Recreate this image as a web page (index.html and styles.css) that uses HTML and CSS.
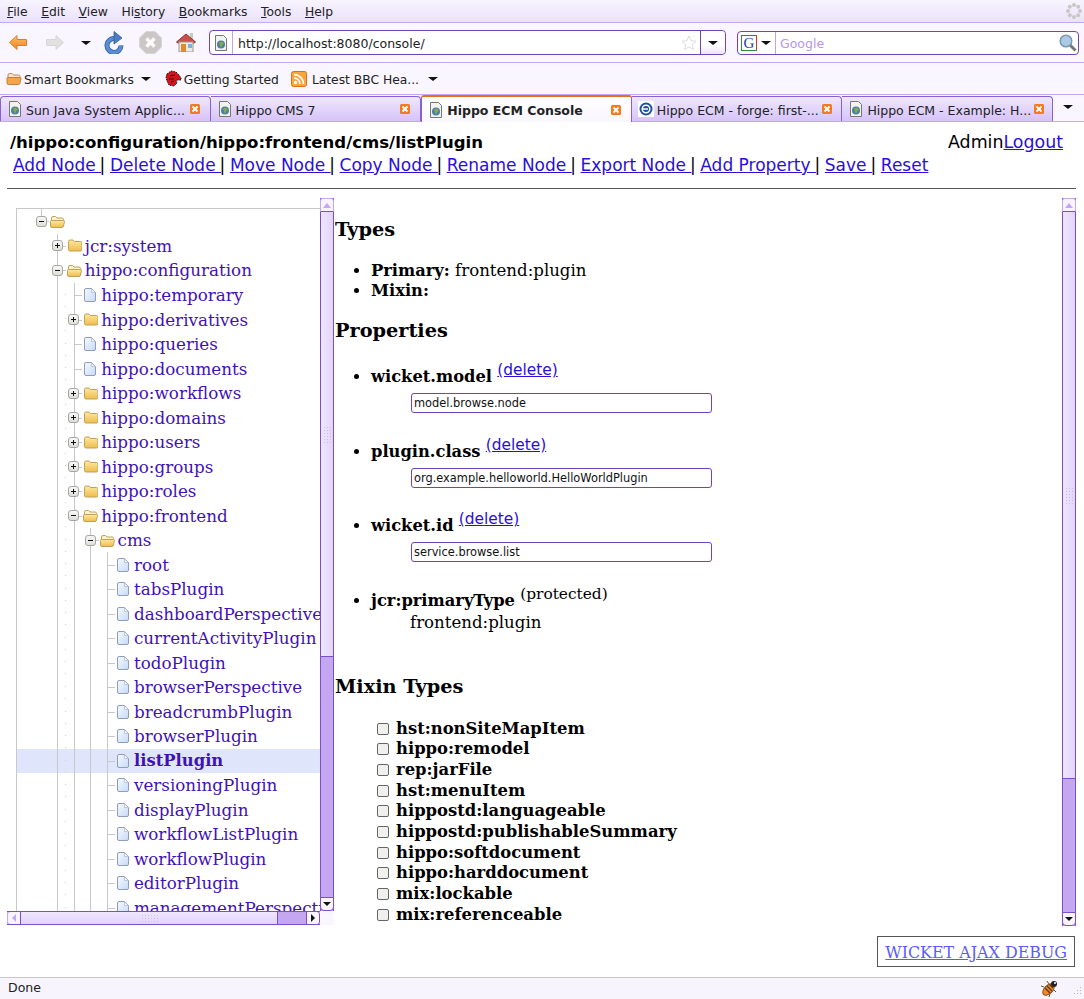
FILE: index.html
```html
<!DOCTYPE html>
<html lang="en">
<head>
    <meta charset="UTF-8">
    <title>Hippo ECM Console</title>
    <link rel="stylesheet" href="styles.css">
</head>
<body>
    <svg class="defs" width="0" height="0">
        <defs>
            <linearGradient id="gold" x1="0" y1="0" x2="0" y2="1"><stop offset="0" stop-color="#fde9a0"/><stop offset="1" stop-color="#eebc4c"/></linearGradient>
            <linearGradient id="paper" x1="0" y1="0" x2="1" y2="1"><stop offset="0" stop-color="#f6fafe"/><stop offset="1" stop-color="#c6daf6"/></linearGradient>
            <linearGradient id="btn" x1="0" y1="0" x2="0" y2="1"><stop offset="0" stop-color="#fafafa"/><stop offset="1" stop-color="#dcdcd8"/></linearGradient>
            <linearGradient id="back" x1="0" y1="0" x2="0" y2="1"><stop offset="0" stop-color="#fbc06a"/><stop offset="1" stop-color="#ee8418"/></linearGradient>
        </defs>
        <symbol id="page" viewBox="0 0 16 16">
            <path d="M2.5 .5h8l3 3v12h-11z" fill="#f2f2ee" stroke="#77776f"/>
            <circle cx="8" cy="9.5" r="4" fill="#4a7fa8"/>
            <path d="M6 7.5l3-1 2 2-2 2-1 2.5-1-2.5z" fill="#8aa84a"/>
        </symbol>
        <symbol id="folder" viewBox="0 0 14 13">
            <path d="M.5 2.5q0-1.500 1.500-1.500h3l1.500 1.500h6q1.500 0 1.500 1.500v6.500q0 1.500-1.500 1.500H2q-1.500 0-1.500-1.500z" fill="url(#gold)" stroke="#c2a05c"/>
        </symbol>
        <symbol id="folder-open" viewBox="0 0 15 13">
            <path d="M1.500 3q0-1.500 1.500-1.500h2.500l1.500 1.500h5q1.500 0 1.500 1.500V6h-12z" fill="#fdf4cc" stroke="#c2a05c"/>
            <path d="M.5 6.500q0-1 1-1h12q1.200 0 1 1l-1 4.500q-.3 1.500-1.500 1.500H2q-1.500 0-1.500-1.500z" fill="url(#gold)" stroke="#c2a05c"/>
        </symbol>
        <symbol id="doc" viewBox="0 0 12 14">
            <path d="M.5 2q0-1.500 1.500-1.500h5.500l4 4v7.500q0 1.500-1.500 1.500H2q-1.500 0-1.500-1.500z" fill="url(#paper)" stroke="#8f9cbd"/>
            <path d="M7.500 .8v3.700h3.700z" fill="#fff" stroke="#a9b5d0" stroke-width=".7"/>
        </symbol>
        <symbol id="plus" viewBox="0 0 11 11">
            <rect x=".5" y=".5" width="10" height="10" rx="2.500" fill="url(#btn)" stroke="#a6a6a2"/>
            <path d="M3 5.500h5M5.500 3v5" stroke="#111"/>
        </symbol>
        <symbol id="minus" viewBox="0 0 11 11">
            <rect x=".5" y=".5" width="10" height="10" rx="2.500" fill="url(#btn)" stroke="#a6a6a2"/>
            <path d="M3 5.500h5" stroke="#111"/>
        </symbol>
        <symbol id="close" viewBox="0 0 10 10">
            <rect width="10" height="10" rx="1.500" fill="#f37a1f"/>
            <path d="M2.500 2.500l5 5M7.500 2.500l-5 5" stroke="#fff" stroke-width="1.800"/>
        </symbol>
        <symbol id="grip" viewBox="0 0 17 9">
            <path d="M1 1h1v1H1zM4 1h1v1H4zM7 1h1v1H7zM10 1h1v1h-1zM13 1h1v1h-1zM16 1h1v1h-1zM1 4h1v1H1zM4 4h1v1H4zM7 4h1v1H7zM10 4h1v1h-1zM13 4h1v1h-1zM16 4h1v1h-1zM1 7h1v1H1zM4 7h1v1H4zM7 7h1v1H7zM10 7h1v1h-1zM13 7h1v1h-1zM16 7h1v1h-1z" fill="#c9c0dc"/>
        </symbol>
        <symbol id="vgrip" viewBox="0 0 9 17">
            <path d="M1 1h1v1H1zM1 4h1v1H1zM1 7h1v1H1zM1 10h1v1H1zM1 13h1v1H1zM1 16h1v1H1zM4 1h1v1H4zM4 4h1v1H4zM4 7h1v1H4zM4 10h1v1H4zM4 13h1v1H4zM4 16h1v1H4zM7 1h1v1H7zM7 4h1v1H7zM7 7h1v1H7zM7 10h1v1H7zM7 13h1v1H7zM7 16h1v1H7z" fill="#c9c0dc"/>
        </symbol>
    </svg>

    <div class="menubar">
        <span class="menu"><u>F</u>ile</span>
        <span class="menu"><u>E</u>dit</span>
        <span class="menu"><u>V</u>iew</span>
        <span class="menu">Hi<u>s</u>tory</span>
        <span class="menu"><u>B</u>ookmarks</span>
        <span class="menu"><u>T</u>ools</span>
        <span class="menu"><u>H</u>elp</span>
        <svg class="throbber" width="16" height="16" viewBox="0 0 16 16">
            <g fill="#c9c6c6">
                <circle cx="8" cy="2" r="2"/><circle cx="12.200" cy="3.800" r="2"/><circle cx="14" cy="8" r="2"/><circle cx="12.200" cy="12.200" r="2"/>
                <circle cx="8" cy="14" r="2"/><circle cx="3.800" cy="12.200" r="2"/><circle cx="2" cy="8" r="2"/><circle cx="3.800" cy="3.800" r="2"/>
            </g>
        </svg>
    </div>

    <div class="navbar">
        <svg class="t-back" width="18" height="15" viewBox="0 0 18 15"><path d="M.5 7.500L8 .5v4h9.500v6H8v4z" fill="url(#back)" stroke="#e07f1e"/></svg>
        <svg class="t-forward" width="18" height="15" viewBox="0 0 18 15"><path d="M17.500 7.500L10 .5v4H.5v6H10v4z" fill="#e2e0e0" stroke="#d8d6d6"/></svg>
        <span class="drop t-drop"></span>
        <svg class="t-reload" width="20" height="23" viewBox="0 0 20 23"><path d="M11 7.500A7 7 0 1 0 17 14.500" fill="none" stroke="#2f5c9f" stroke-width="5"/><path d="M11 7.500A7 7 0 1 0 17 14.500" fill="none" stroke="#5a8ed2" stroke-width="3.500"/><path d="M10 .5l8 6.500-8 6z" fill="#4c7fc4" stroke="#2f5c9f" stroke-width=".8"/></svg>
        <svg class="t-stop" width="23" height="23" viewBox="0 0 23 23"><path d="M7 .5h9L22.500 7v9L16 22.500H7L.5 16V7z" fill="#cbc7c7" stroke="#d8d5d5"/><path d="M7.500 7.500l8 8M15.500 7.500l-8 8" stroke="#fff" stroke-width="3.200"/></svg>
        <svg class="t-home" width="20" height="19" viewBox="0 0 20 19"><rect x="14" y="0" width="3" height="6" fill="#c9c6bc"/><path d="M.5 9L10 1l9.500 8-1.500 1H2z" fill="#c9504a" stroke="#8c332f"/><rect x="3" y="9" width="14" height="10" fill="#eeeae0" stroke="#9d9a90"/><rect x="5" y="11" width="5" height="8" fill="#e08a30"/><rect x="12" y="11" width="4" height="4" fill="#7fb0d8"/></svg>

        <div class="urlbar">
            <span class="site-box"><svg width="16" height="16"><use href="#page"/></svg></span>
            <span class="url-text">http://localhost:8080/console/</span>
            <svg class="star" width="16" height="16" viewBox="0 0 16 16"><path d="M8 1l2.100 4.700 5 .5-3.800 3.300 1.100 5L8 11.900l-4.400 2.600 1.100-5L.9 6.200l5-.5z" fill="#fff" stroke="#dcdcdc"/></svg>
            <span class="url-drop"><span class="drop"></span></span>
        </div>
        <div class="searchbar">
            <span class="engine">
                <span class="g-logo">G</span>
                <span class="drop"></span>
            </span>
            <span class="search-text">Google</span>
            <svg class="glass" width="18" height="18" viewBox="0 0 18 18"><path d="M11 11l5.500 5.500" stroke="#77776f" stroke-width="3"/><circle cx="7" cy="7" r="5.800" fill="#a9cbe8" stroke="#7d97ad" stroke-width="1.500"/></svg>
        </div>
    </div>

    <div class="bookmarks">
        <span class="bm">
            <svg width="16" height="13" viewBox="0 0 15 13"><path d="M1.500 3q0-1.500 1.500-1.500h2.500l1.500 1.500h5q1.500 0 1.500 1.500V6h-12z" fill="#f4e2cf" stroke="#b98a5c"/><path d="M.5 6.500q0-1 1-1h12q1.200 0 1 1l-1 4.500q-.3 1.500-1.500 1.500H2q-1.500 0-1.500-1.500z" fill="#f5a44e" stroke="#c87f35"/></svg>
            <span class="bm-text">Smart Bookmarks</span>
            <span class="drop bm-drop"></span>
        </span>
        <span class="bm">
            <svg width="17" height="17" viewBox="0 0 17 17"><path d="M2 4l4-3 5 1 3 3 2 3v2l-5 0 1 3-3 3-5-1-2-4-1-4z" fill="#d2141c" stroke="#1a1a1a" stroke-dasharray="1.500 1"/><path d="M5 6l5-1M4 9l5 0M6 12l3-1" stroke="#5a0508"/></svg>
            <span class="bm-text">Getting Started</span>
        </span>
        <span class="bm rss">
            <svg width="16" height="16" viewBox="0 0 16 16"><rect x=".5" y=".5" width="15" height="15" rx="2" fill="#f8a53a" stroke="#d9701a"/><circle cx="4.500" cy="11.500" r="1.700" fill="#fff"/><path d="M3 7a6 6 0 0 1 6 6M3 3.500a9.500 9.500 0 0 1 9.500 9.500" fill="none" stroke="#fff" stroke-width="1.700"/></svg>
            <span class="bm-text">Latest BBC Hea...</span>
            <span class="drop bm-drop-far"></span>
        </span>
    </div>

    <div class="tabstrip">
        <div class="tab"><svg width="16" height="16"><use href="#page"/></svg><span class="tab-title">Sun Java System Applic...</span><svg class="tab-close" width="10" height="10"><use href="#close"/></svg></div>
        <div class="tab"><svg width="16" height="16"><use href="#page"/></svg><span class="tab-title">Hippo CMS 7</span><svg class="tab-close" width="10" height="10"><use href="#close"/></svg></div>
        <div class="tab active"><svg width="16" height="16"><use href="#page"/></svg><span class="tab-title">Hippo ECM Console</span><svg class="tab-close" width="10" height="10"><use href="#close"/></svg></div>
        <div class="tab"><svg width="16" height="16" viewBox="0 0 16 16"><rect width="16" height="16" fill="#fff"/><circle cx="8" cy="8" r="6.500" fill="#1f4f9c"/><circle cx="8" cy="8" r="3.800" fill="none" stroke="#fff" stroke-width="1.500"/><path d="M5 8h5" stroke="#fff" stroke-width="1.500"/></svg><span class="tab-title">Hippo ECM - forge: first-...</span><svg class="tab-close" width="10" height="10"><use href="#close"/></svg></div>
        <div class="tab"><svg width="16" height="16"><use href="#page"/></svg><span class="tab-title">Hippo ECM - Example: H...</span><svg class="tab-close" width="10" height="10"><use href="#close"/></svg></div>
        <div class="tab-end"><span class="drop"></span></div>
    </div>

    <div class="page">
        <div class="head-row">
            <div class="crumb">/hippo:configuration/hippo:frontend/cms/listPlugin</div>
            <div class="user">Admin<a href="#">Logout</a></div>
        </div>
        <div class="actions">
            <a href="#">Add Node </a> <span class="sep">|</span> <a href="#">Delete Node </a> <span class="sep">|</span> <a href="#">Move Node </a> <span class="sep">|</span> <a href="#">Copy Node </a> <span class="sep">|</span> <a href="#">Rename Node </a> <span class="sep">|</span> <a href="#">Export Node </a> <span class="sep">|</span> <a href="#">Add Property </a> <span class="sep">|</span> <a href="#">Save </a> <span class="sep">|</span> <a href="#">Reset</a>
        </div>
        <hr class="rule">

        <div class="panes">
            <div class="tree-pane">
                <div class="tree-view">
                    <div class="tree-box">
                        <div class="tree">
                            <div class="row"><span class="jn first"><svg width="11" height="11"><use href="#minus"/></svg></span><svg class="ico" width="15" height="13"><use href="#folder-open"/></svg></div>
                            <div class="row"><i class="gap"></i><span class="jn"><svg width="11" height="11"><use href="#plus"/></svg></span><svg class="ico" width="14" height="13"><use href="#folder"/></svg><a href="#">jcr:system</a></div>
                            <div class="row"><i class="gap"></i><span class="jn"><svg width="11" height="11"><use href="#minus"/></svg></span><svg class="ico" width="15" height="13"><use href="#folder-open"/></svg><a href="#">hippo:configuration</a></div>
                            <div class="row"><i class="gap"></i><i class="g"></i><span class="jn leaf"></span><svg class="ico" width="12" height="14"><use href="#doc"/></svg><a href="#">hippo:temporary</a></div>
                            <div class="row"><i class="gap"></i><i class="g"></i><span class="jn"><svg width="11" height="11"><use href="#plus"/></svg></span><svg class="ico" width="14" height="13"><use href="#folder"/></svg><a href="#">hippo:derivatives</a></div>
                            <div class="row"><i class="gap"></i><i class="g"></i><span class="jn leaf"></span><svg class="ico" width="12" height="14"><use href="#doc"/></svg><a href="#">hippo:queries</a></div>
                            <div class="row"><i class="gap"></i><i class="g"></i><span class="jn leaf"></span><svg class="ico" width="12" height="14"><use href="#doc"/></svg><a href="#">hippo:documents</a></div>
                            <div class="row"><i class="gap"></i><i class="g"></i><span class="jn"><svg width="11" height="11"><use href="#plus"/></svg></span><svg class="ico" width="14" height="13"><use href="#folder"/></svg><a href="#">hippo:workflows</a></div>
                            <div class="row"><i class="gap"></i><i class="g"></i><span class="jn"><svg width="11" height="11"><use href="#plus"/></svg></span><svg class="ico" width="14" height="13"><use href="#folder"/></svg><a href="#">hippo:domains</a></div>
                            <div class="row"><i class="gap"></i><i class="g"></i><span class="jn"><svg width="11" height="11"><use href="#plus"/></svg></span><svg class="ico" width="14" height="13"><use href="#folder"/></svg><a href="#">hippo:users</a></div>
                            <div class="row"><i class="gap"></i><i class="g"></i><span class="jn"><svg width="11" height="11"><use href="#plus"/></svg></span><svg class="ico" width="14" height="13"><use href="#folder"/></svg><a href="#">hippo:groups</a></div>
                            <div class="row"><i class="gap"></i><i class="g"></i><span class="jn"><svg width="11" height="11"><use href="#plus"/></svg></span><svg class="ico" width="14" height="13"><use href="#folder"/></svg><a href="#">hippo:roles</a></div>
                            <div class="row"><i class="gap"></i><i class="g"></i><span class="jn"><svg width="11" height="11"><use href="#minus"/></svg></span><svg class="ico" width="15" height="13"><use href="#folder-open"/></svg><a href="#">hippo:frontend</a></div>
                            <div class="row"><i class="gap"></i><i class="g"></i><i class="g"></i><span class="jn"><svg width="11" height="11"><use href="#minus"/></svg></span><svg class="ico" width="15" height="13"><use href="#folder-open"/></svg><a href="#">cms</a></div>
                            <div class="row"><i class="gap"></i><i class="g"></i><i class="g"></i><i class="g"></i><span class="jn leaf"></span><svg class="ico" width="12" height="14"><use href="#doc"/></svg><a href="#">root</a></div>
                            <div class="row"><i class="gap"></i><i class="g"></i><i class="g"></i><i class="g"></i><span class="jn leaf"></span><svg class="ico" width="12" height="14"><use href="#doc"/></svg><a href="#">tabsPlugin</a></div>
                            <div class="row"><i class="gap"></i><i class="g"></i><i class="g"></i><i class="g"></i><span class="jn leaf"></span><svg class="ico" width="12" height="14"><use href="#doc"/></svg><a href="#">dashboardPerspective</a></div>
                            <div class="row"><i class="gap"></i><i class="g"></i><i class="g"></i><i class="g"></i><span class="jn leaf"></span><svg class="ico" width="12" height="14"><use href="#doc"/></svg><a href="#">currentActivityPlugin</a></div>
                            <div class="row"><i class="gap"></i><i class="g"></i><i class="g"></i><i class="g"></i><span class="jn leaf"></span><svg class="ico" width="12" height="14"><use href="#doc"/></svg><a href="#">todoPlugin</a></div>
                            <div class="row"><i class="gap"></i><i class="g"></i><i class="g"></i><i class="g"></i><span class="jn leaf"></span><svg class="ico" width="12" height="14"><use href="#doc"/></svg><a href="#">browserPerspective</a></div>
                            <div class="row"><i class="gap"></i><i class="g"></i><i class="g"></i><i class="g"></i><span class="jn leaf"></span><svg class="ico" width="12" height="14"><use href="#doc"/></svg><a href="#">breadcrumbPlugin</a></div>
                            <div class="row"><i class="gap"></i><i class="g"></i><i class="g"></i><i class="g"></i><span class="jn leaf"></span><svg class="ico" width="12" height="14"><use href="#doc"/></svg><a href="#">browserPlugin</a></div>
                            <div class="row selected"><i class="gap"></i><i class="g"></i><i class="g"></i><i class="g"></i><span class="jn leaf"></span><svg class="ico" width="12" height="14"><use href="#doc"/></svg><a href="#">listPlugin</a></div>
                            <div class="row"><i class="gap"></i><i class="g"></i><i class="g"></i><i class="g"></i><span class="jn leaf"></span><svg class="ico" width="12" height="14"><use href="#doc"/></svg><a href="#">versioningPlugin</a></div>
                            <div class="row"><i class="gap"></i><i class="g"></i><i class="g"></i><i class="g"></i><span class="jn leaf"></span><svg class="ico" width="12" height="14"><use href="#doc"/></svg><a href="#">displayPlugin</a></div>
                            <div class="row"><i class="gap"></i><i class="g"></i><i class="g"></i><i class="g"></i><span class="jn leaf"></span><svg class="ico" width="12" height="14"><use href="#doc"/></svg><a href="#">workflowListPlugin</a></div>
                            <div class="row"><i class="gap"></i><i class="g"></i><i class="g"></i><i class="g"></i><span class="jn leaf"></span><svg class="ico" width="12" height="14"><use href="#doc"/></svg><a href="#">workflowPlugin</a></div>
                            <div class="row"><i class="gap"></i><i class="g"></i><i class="g"></i><i class="g"></i><span class="jn leaf"></span><svg class="ico" width="12" height="14"><use href="#doc"/></svg><a href="#">editorPlugin</a></div>
                            <div class="row"><i class="gap"></i><i class="g"></i><i class="g"></i><i class="g"></i><span class="jn leaf"></span><svg class="ico" width="12" height="14"><use href="#doc"/></svg><a href="#">managementPerspective</a></div>
                        </div>
                    </div>
                    <div class="vscroll">
                        <span class="sb-btn up"><i class="arr-up"></i></span>
                        <span class="sb-thumb tree-thumb"><svg width="9" height="17"><use href="#vgrip"/></svg></span>
                        <span class="sb-track"></span>
                        <span class="sb-btn down"><i class="arr-down"></i></span>
                    </div>
                </div>
                <div class="hscroll">
                    <span class="sb-btn left"><i class="arr-left"></i></span>
                    <span class="sb-thumb h-thumb"><svg width="17" height="9"><use href="#grip"/></svg></span>
                    <span class="sb-track"></span>
                    <span class="sb-btn right"><i class="arr-right"></i></span>
                </div>
            </div>

            <div class="detail">
                <div class="detail-body">
                    <h3>Types</h3>
                    <ul class="types">
                        <li><b>Primary:</b> frontend:plugin</li>
                        <li><b>Mixin:</b></li>
                    </ul>
                    <h3 class="props-head">Properties</h3>
                    <ul class="props">
                        <li><b>wicket.model</b> <a class="sup" href="#">(delete)</a><input class="prop-input" value="model.browse.node"></li>
                        <li><b>plugin.class</b> <a class="sup" href="#">(delete)</a><input class="prop-input" value="org.example.helloworld.HelloWorldPlugin"></li>
                        <li><b>wicket.id</b> <a class="sup" href="#">(delete)</a><input class="prop-input" value="service.browse.list"></li>
                        <li class="ro"><b>jcr:primaryType</b> <span class="sup">(protected)</span><div class="prop-value">frontend:plugin</div></li>
                    </ul>
                    <h3 class="mixin-head">Mixin Types</h3>
                    <div class="mixins">
                        <label><i class="check"></i>hst:nonSiteMapItem</label>
                        <label><i class="check"></i>hippo:remodel</label>
                        <label><i class="check"></i>rep:jarFile</label>
                        <label><i class="check"></i>hst:menuItem</label>
                        <label><i class="check"></i>hippostd:languageable</label>
                        <label><i class="check"></i>hippostd:publishableSummary</label>
                        <label><i class="check"></i>hippo:softdocument</label>
                        <label><i class="check"></i>hippo:harddocument</label>
                        <label><i class="check"></i>mix:lockable</label>
                        <label><i class="check"></i>mix:referenceable</label>
                    </div>
                </div>
                <div class="vscroll">
                    <span class="sb-btn up"><i class="arr-up"></i></span>
                    <span class="sb-thumb detail-thumb"><svg width="9" height="17"><use href="#vgrip"/></svg></span>
                    <span class="sb-track"></span>
                    <span class="sb-btn down"><i class="arr-down"></i></span>
                </div>
            </div>
        </div>

        <div class="debug-row">
            <a class="debug" href="#">WICKET AJAX DEBUG</a>
        </div>
    </div>

    <div class="statusbar">
        <span class="status-text">Done</span>
        <span class="status-right">
            <svg width="18" height="17" viewBox="0 0 18 17"><path d="M3 7L0 6M5 12l-3 2M9 14l-1 3M12 9l3 3M8 4L6 1" stroke="#555"/><ellipse cx="7.500" cy="9.500" rx="7" ry="4.200" transform="rotate(-45 7.500 9.500)" fill="#ef8a2a" stroke="#8a5520"/><path d="M4 8l5 5M6 6l5 5M8.500 4.500l3.500 3.500" stroke="#5a3310" stroke-width="1.200"/><circle cx="13" cy="4" r="3" fill="#222"/><circle cx="14" cy="3" r="1" fill="#fff"/></svg>
            <svg class="resize" width="10" height="11" viewBox="0 0 10 11"><path d="M8 1h1v1H8zM5 4h1v1H5zM8 4h1v1H8zM2 7h1v1H2zM5 7h1v1H5zM8 7h1v1H8z" fill="#b5b0bf"/></svg>
        </span>
    </div>
</body>
</html>
```

FILE: styles.css
```css
*{
    box-sizing:border-box;
}
html,body{
    margin:0;
    padding:0;
    height:100%;
    overflow:hidden;
}
body{
    display:flex;
    flex-direction:column;
    height:999px;
    background:#fff;
    color:#000;
    font-family:"DejaVu Sans",sans-serif;
    font-size:13px;
}
.defs{
    position:absolute;
}
svg{
    display:block;
    flex:none;
}

/* browser chrome */
.menubar{
    height:23px;
    display:flex;
    align-items:center;
    padding:0 0 0 7px;
    gap:13.6px;
    font-size:12.3px;
    color:#222;
    background:linear-gradient(#f7f4ff,#ebe2fc);
    border-bottom:1px solid #c5a9f0;
}
.menu{
    padding-top:2px;
}
.throbber{
    margin-left:auto;
    margin-right:2px;
}
.navbar{
    height:40px;
    display:flex;
    align-items:center;
    padding:0 0 0 9px;
    background:#f9f6ff;
    border-bottom:1px solid #c5a9f0;
}
.t-forward{
    margin-left:19px;
}
.t-drop{
    margin:0 13px 0 17px;
}
.t-stop{
    margin-left:15px;
}
.t-home{
    margin-left:14px;
}
.drop{
    display:inline-block;
    flex:none;
    width:0;
    height:0;
    border-left:5px solid transparent;
    border-right:5px solid transparent;
    border-top:4px solid #111;
}
.urlbar{
    width:517px;
    height:25px;
    display:flex;
    align-items:center;
    margin-left:13px;
    background:#fff;
    border:1px solid #6f42c1;
    border-radius:4px;
}
.site-box{
    width:23px;
    height:100%;
    display:flex;
    align-items:center;
    justify-content:center;
    border-right:1px solid #bfa3ee;
    flex:none;
}
.url-text{
    flex:1;
    padding:2px 0 0 5px;
    font-size:12.5px;
    color:#222;
}
.star{
    margin-right:3px;
}
.url-drop{
    width:25px;
    height:100%;
    display:flex;
    align-items:center;
    justify-content:center;
    border-left:1px solid #6f42c1;
    background:linear-gradient(#fff 60%,#ece4fb);
    border-radius:0 4px 4px 0;
}
.searchbar{
    width:342px;
    height:24px;
    display:flex;
    align-items:center;
    margin-left:11px;
    background:#fff;
    border:1px solid #6f42c1;
    border-radius:4px;
}
.engine{
    width:38px;
    height:100%;
    display:flex;
    align-items:center;
    gap:4px;
    padding-left:3px;
    border-right:1px solid #bfa3ee;
    flex:none;
}
.g-logo{
    width:16px;
    height:16px;
    flex:none;
    border:1px solid #2f8f3f;
    border-right-color:#c33;
    border-top-color:#36c;
    color:#1a3fb0;
    font:15px/14px "Liberation Serif",serif;
    text-align:center;
}
.search-text{
    flex:1;
    padding:2px 0 0 4px;
    color:#b795ee;
    font-size:12.5px;
}
.glass{
    margin-right:1px;
}
.bookmarks{
    height:32px;
    display:flex;
    align-items:center;
    padding:0 0 0 6px;
    gap:12px;
    font-size:12.3px;
    color:#222;
    background:#f9f6ff;
    border-bottom:1px solid #c5a9f0;
}
.bm{
    display:flex;
    align-items:center;
    gap:2px;
    white-space:nowrap;
}
.bm-text{
    padding-top:2px;
}
.bm-drop{
    margin-left:5px;
    margin-right:2px;
}
.rss{
    gap:5px;
}
.bm-drop-far{
    margin-left:4px;
}
.tabstrip{
    height:27px;
    display:flex;
    align-items:flex-end;
    background:#f9f6ff;
    border-bottom:1px solid #c5a9f0;
    font-size:12.5px;
    color:#222;
}
.tab{
    width:210.6px;
    height:25px;
    flex:none;
    display:flex;
    align-items:center;
    padding:0 10px 0 6px;
    gap:3px;
    background:linear-gradient(#efe7fe,#d6c3f8);
    border:1px solid #8a5fd0;
    border-bottom:none;
    border-left-width:0;
    border-radius:0 4px 0 0;
}
.tab:first-child{
    border-left-width:1px;
    border-radius:4px 4px 0 0;
}
.tab.active{
    height:27px;
    background:linear-gradient(#fff,#f9f6ff);
    border:none;
    border-top:2px solid #e8701a;
    border-left:1px solid #8a5fd0;
    border-right:1px solid #8a5fd0;
    border-radius:3px 3px 0 0;
    margin-bottom:-1px;
    font-weight:bold;
}
.tab-title{
    flex:1;
    padding-top:2px;
    white-space:nowrap;
}
.tab-close{
    margin-left:auto;
}
.tab-end{
    flex:1;
    height:25px;
    display:flex;
    align-items:flex-start;
    justify-content:center;
    padding-top:9px;
}

/* page */
.page{
    flex:1;
    min-height:0;
    padding:9px 8px 0 7px;
    display:flex;
    flex-direction:column;
    font-size:17px;
}
.page a{
    color:#2a0fd8;
}
.head-row{
    display:flex;
    justify-content:space-between;
    padding:0 13px 0 3px;
    line-height:23px;
}
.crumb{
    font-weight:bold;
    font-size:16.55px;
}
.user{
    font-size:17.4px;
}
.actions{
    padding-left:6px;
    line-height:23px;
    white-space:nowrap;
}
.sep{
    margin:0 -.75px 0 -1.5px;
}
.rule{
    height:1px;
    margin:11px 0 9px 0;
    border:none;
    background:#555;
}
.panes{
    display:flex;
    height:728px;
}
.tree-pane{
    width:327px;
    height:727px;
    flex:none;
    display:flex;
    flex-direction:column;
    background:#f9f6ff;
}
.tree-view{
    height:713px;
    display:flex;
    background:#fff;
}
.tree-box{
    flex:1;
    min-width:0;
    margin-top:10px;
    margin-left:9px;
    border-top:1px solid #c8c8c8;
    border-left:1px solid #c8c8c8;
    overflow:hidden;
}
.tree{
    padding-top:.2px;
    font-family:"DejaVu Serif",serif;
    font-size:16.75px;
    white-space:nowrap;
}
.row{
    height:24.52px;
    display:flex;
    align-items:center;
    padding-left:16px;
}
.row a{
    color:#3f12b8;
    text-decoration:none;
    margin-left:4px;
}
.row.selected{
    background:#dfe6fb;
}
.row.selected a{
    font-weight:bold;
    font-size:16.4px;
}
.gap,.g,.jn{
    width:16.4px;
    height:100%;
    flex:none;
    position:relative;
    display:flex;
    align-items:center;
    justify-content:center;
}
.g::before{
    content:"";
    position:absolute;
    left:8px;
    top:0;
    bottom:0;
    border-left:1px solid #c8c8c8;
}
.gap + .g::after{
    content:"";
    position:absolute;
    right:0;
    top:0;
    bottom:0;
    width:1px;
    background:repeating-linear-gradient(transparent 0 11px,#d0d0d0 11px 12px);
}
.jn{
    z-index:0;
}
.jn::before{
    content:"";
    position:absolute;
    left:8px;
    top:0;
    bottom:0;
    border-left:1px solid #c8c8c8;
    z-index:-1;
}
.jn::after{
    content:"";
    position:absolute;
    left:8px;
    right:0;
    top:50%;
    border-top:1px solid #c8c8c8;
    z-index:-1;
}
.jn.first::before{
    bottom:50%;
}
.ico{
    margin-left:2px;
    margin-right:-1px;
}
svg.ico[width="15"]{
    margin-left:1px;
    margin-right:-1px;
}
svg.ico[width="12"]{
    margin-left:2px;
    margin-right:1px;
}

/* scrollbars */
.vscroll{
    width:14px;
    flex:none;
    display:flex;
    flex-direction:column;
    border-left:1px solid #7b4fcb;
    border-right:1px solid #7b4fcb;
    background:#c4a7f0;
}
.hscroll{
    height:14px;
    width:313px;
    flex:none;
    display:flex;
    border-top:1px solid #7b4fcb;
    border-bottom:1px solid #7b4fcb;
    background:#c4a7f0;
}
.sb-btn{
    flex:none;
    display:flex;
    align-items:center;
    justify-content:center;
    background:#f7f4fc;
}
.vscroll .sb-btn{
    height:14px;
}
.hscroll .sb-btn{
    width:14px;
}
.sb-btn.up{
    margin:0 -1px;
    border:1px solid #c5a9f0;
    border-bottom:1px solid #7b4fcb;
    border-radius:3px 3px 0 0;
}
.sb-btn.down{
    margin:0 -1px;
    border:1px solid #7b4fcb;
    border-radius:0 0 4px 4px;
}
.sb-btn.left{
    border-left:1px solid #c5a9f0;
    border-right:1px solid #7b4fcb;
    border-radius:3px 0 0 3px;
}
.sb-btn.right{
    border-left:1px solid #7b4fcb;
    border-right:1px solid #7b4fcb;
    border-radius:0 3px 3px 0;
}
.arr-up{
    border-left:4px solid transparent;
    border-right:4px solid transparent;
    border-bottom:5px solid #c4a7f0;
}
.arr-down{
    border-left:4px solid transparent;
    border-right:4px solid transparent;
    border-top:4px solid #111;
}
.arr-left{
    border-top:4px solid transparent;
    border-bottom:4px solid transparent;
    border-right:4px solid #c4a7f0;
}
.arr-right{
    border-top:4px solid transparent;
    border-bottom:4px solid transparent;
    border-left:4px solid #111;
}
.sb-thumb{
    flex:none;
    display:flex;
    align-items:center;
    justify-content:center;
    border-bottom:1px solid #7b4fcb;
    background:linear-gradient(90deg,#efe6fe,#e3d4fb);
}
.hscroll .sb-thumb{
    border-bottom:none;
    border-right:1px solid #7b4fcb;
    background:linear-gradient(#efe6fe,#e3d4fb);
}
.tree-thumb{
    height:445px;
}
.detail-thumb{
    height:567px;
}
.h-thumb{
    width:257px;
}
.sb-track{
    flex:1;
}

/* right side */
.detail{
    flex:1;
    min-width:0;
    display:flex;
    margin-left:1px;
}
.detail-body{
    flex:1;
    min-width:0;
    overflow:hidden;
    font-family:"DejaVu Serif",serif;
    font-size:16.6px;
    line-height:20px;
}
.detail-body b{
    font-size:16.3px;
}
h3{
    margin:21px 0 0 0;
    font-size:19.3px;
    line-height:22px;
}
.types{
    margin:20px 0 0 0;
    padding:0 0 0 36px;
}
.types li{
    height:20px;
}
.props-head{
    margin-top:19px;
}
.props{
    margin:18px 0 0 0;
    padding:0 0 0 36px;
}
.props li{
    height:74.6px;
}
.sup{
    font-family:"DejaVu Sans",sans-serif;
    font-size:15.4px;
    vertical-align:7px;
}
.ro .sup{
    font-family:"DejaVu Serif",serif;
    font-size:15.4px;
}
.prop-input{
    display:block;
    width:301px;
    height:20px;
    margin:6px 0 0 40px;
    padding:0 2px;
    background:#fff;
    color:#111;
    border:1px solid #6f42c1;
    border-radius:3px;
    font-family:"DejaVu Sans",sans-serif;
    font-size:11.4px;
}
.prop-value{
    margin:2px 0 0 39px;
}
.mixin-head{
    margin-top:18px;
}
.mixins{
    margin-top:20px;
    padding-left:42px;
    display:flex;
    flex-direction:column;
    font-weight:bold;
    font-size:16.4px;
}
.mixins label{
    height:20.67px;
    display:flex;
    align-items:center;
}
.check{
    width:12px;
    height:12px;
    margin-right:7px;
    flex:none;
    background:#f0f0ec;
    border:1px solid #666;
    border-radius:2px;
}
.debug-row{
    display:flex;
    justify-content:flex-end;
    padding-top:10px;
    padding-right:1px;
}
.page a.debug{
    height:31px;
    padding:0 7px;
    border:1px solid #555;
    color:#5a5aff;
    font-family:"DejaVu Serif",serif;
    font-size:15.9px;
    line-height:31px;
}

.statusbar{
    height:22px;
    flex:none;
    display:flex;
    align-items:center;
    justify-content:space-between;
    padding:0 2px 0 8px;
    font-size:12.5px;
    color:#222;
    background:#f7f4fe;
    border-top:1px solid #c8c8c8;
}
.status-text{
    padding-bottom:2px;
}
.status-right{
    display:flex;
    align-items:center;
    gap:13px;
}
.resize{
    align-self:flex-end;
}
```
